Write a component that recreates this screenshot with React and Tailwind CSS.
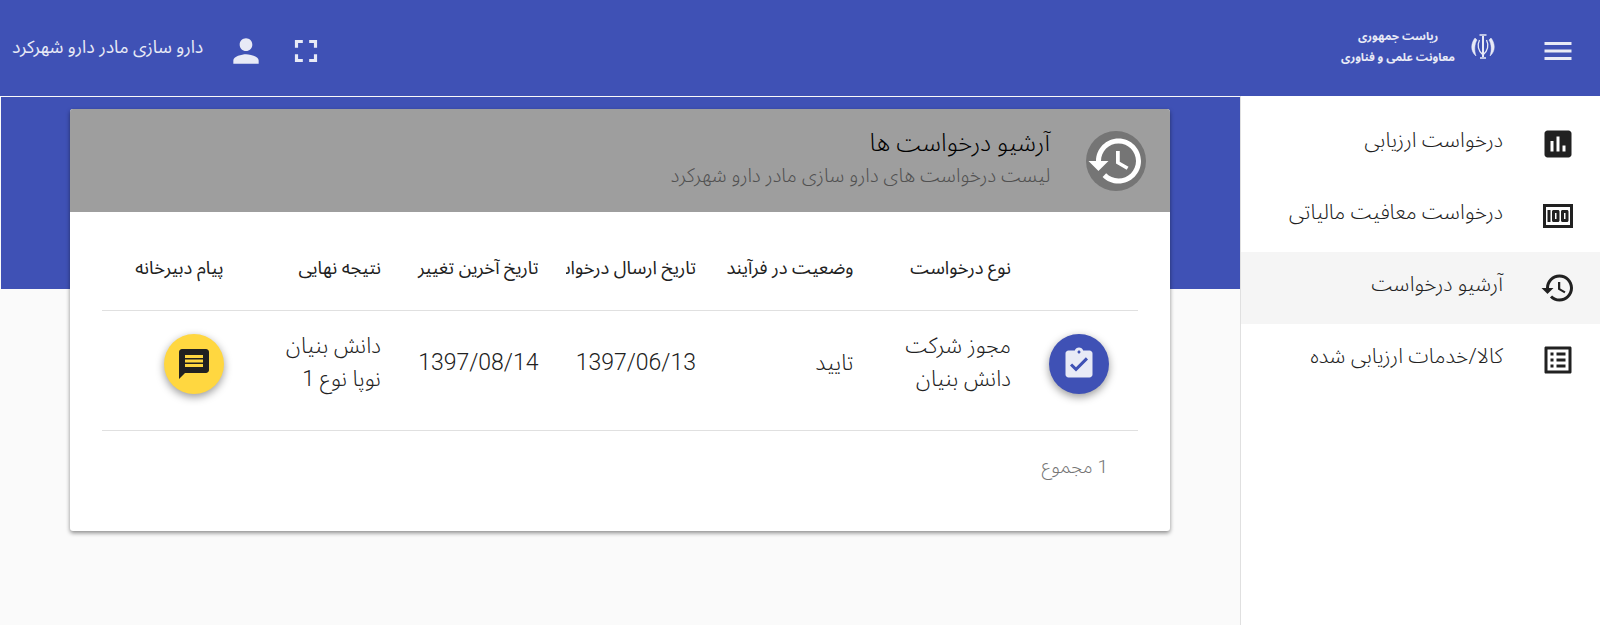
import React from "react";

const font = { fontFamily: "Roboto, 'Noto Sans Arabic', 'DejaVu Sans', sans-serif" };

const paths = {
  menu: "M3 18h18v-2H3v2zm0-5h18v-2H3v2zm0-7v2h18V6H3z",
  fullscreen: "M7 14H5v5h5v-2H7v-3zm-2-4h2V7h3V5H5v5zm12 7h-3v2h5v-5h-2v3zM14 5v2h3v3h2V5h-5z",
  person: "M12 12c2.21 0 4-1.79 4-4s-1.79-4-4-4-4 1.79-4 4 1.79 4 4 4zm0 2c-2.67 0-8 1.34-8 4v2h16v-2c0-2.66-5.33-4-8-4z",
  assessment: "M19 3H5c-1.1 0-2 .9-2 2v14c0 1.1.9 2 2 2h14c1.1 0 2-.9 2-2V5c0-1.1-.9-2-2-2zM9 17H7v-7h2v7zm4 0h-2V7h2v10zm4 0h-2v-4h2v4z",
  money: "M5 8h2v8H5zm7 0H9c-.55 0-1 .45-1 1v6c0 .55.45 1 1 1h3c.55 0 1-.45 1-1V9c0-.55-.45-1-1-1zm-1 6h-1v-4h1v4zm7-6h-3c-.55 0-1 .45-1 1v6c0 .55.45 1 1 1h3c.55 0 1-.45 1-1V9c0-.55-.45-1-1-1zm-1 6h-1v-4h1v4zM2 4v16h20V4H2zm2 14V6h16v12H4z",
  history: "M13 3c-4.97 0-9 4.03-9 9H1l3.89 3.89.07.14L9 12H6c0-3.87 3.13-7 7-7s7 3.13 7 7-3.13 7-7 7c-1.93 0-3.68-.79-4.94-2.06l-1.42 1.42C8.27 19.99 10.51 21 13 21c4.97 0 9-4.03 9-9s-4.03-9-9-9zm-1 5v5l4.28 2.54.72-1.21-3.5-2.08V8H12z",
  listAlt: "M19 5v14H5V5h14m1.1-2H3.9c-.5 0-.9.4-.9.9v16.2c0 .4.4.9.9.9h16.2c.4 0 .9-.5.9-.9V3.9c0-.5-.5-.9-.9-.9zM11 7h6v2h-6V7zm0 4h6v2h-6v-2zm0 4h6v2h-6zM7 7h2v2H7zm0 4h2v2H7zm0 4h2v2H7z",
  assignment: "M19 3h-4.18C14.4 1.84 13.3 1 12 1c-1.3 0-2.4.84-2.82 2H5c-1.1 0-2 .9-2 2v14c0 1.1.9 2 2 2h14c1.1 0 2-.9 2-2V5c0-1.1-.9-2-2-2zm-7 0c.55 0 1 .45 1 1s-.45 1-1 1-1-.45-1-1 .45-1 1-1zm-2 14l-4-4 1.41-1.41L10 14.17l6.59-6.59L18 9l-8 8z",
  message: "M20 2H4c-1.1 0-1.99.9-1.99 2L2 22l4-4h14c1.1 0 2-.9 2-2V4c0-1.1-.9-2-2-2zm-2 12H6v-2h12v2zm0-3H6V9h12v2zm0-3H6V6h12v2z",
};

const Icon = ({ name, className }) => (
  <svg viewBox="0 0 24 24" fill="currentColor" className={className}>
    <path d={paths[name]} />
  </svg>
);

const Emblem = () => (
  <svg viewBox="0 0 26 27" fill="none" stroke="currentColor" className="h-[27px] w-[26px] text-[#e8eaf6]">
    <path d="M13 3v21" strokeWidth="2" />
    <path d="M9.5 2h7M10 25h6" strokeWidth="1.4" />
    <path d="M9.500 7c-2.500 5-1.500 11 3.500 15 5-4 6-10 3.500-15" strokeWidth="1.3" />
    <path d="M5 5C1 10 0 18 6 23c-2-6-1.500-12 1-16z" fill="currentColor" strokeWidth="0.5" />
    <path d="M21 5c4 5 5 13-1 18 2-6 1.500-12-1-16z" fill="currentColor" strokeWidth="0.5" />
  </svg>
);

const menuItems = [
  { label: "درخواست ارزیابی", icon: "assessment" },
  { label: "درخواست معافیت مالیاتی", icon: "money" },
  { label: "آرشیو درخواست", icon: "history", active: true },
  { label: "کالا/خدمات ارزیابی شده", icon: "listAlt" },
];

const columns = [
  "نوع درخواست",
  "وضعیت در فرآیند ارزیابی",
  "تاریخ ارسال درخواست",
  "تاریخ آخرین تغییر",
  "نتیجه نهایی",
  "پیام دبیرخانه",
];

const gridCols = "grid grid-cols-[127px_repeat(5,157.5px)_1fr]";

const Cell = ({ children, className = "text-[22px]" }) => (
  <div className={`mt-[-3px] w-[130px] leading-[33px] font-light text-[#212121] ${className}`}>{children}</div>
);

export default function App() {
  return (
    <div dir="rtl" style={font} className="flex h-[625px] w-[1600px] flex-col overflow-hidden bg-[#fafafa]">
      <header className="flex h-24 shrink-0 items-center bg-[#3f51b5] pt-[5px] pr-6 pl-3 text-[#e8eaf6]">
        <Icon name="menu" className="h-9 w-9" />
        <div className="mt-[-9px] mr-[44px]">
          <Emblem />
        </div>
        <div className="mt-[-7px] mr-[15px] text-center text-[11.5px] leading-[21px] font-bold">
          <div>ریاست جمهوری</div>
          <div>معاونت علمی و فناوری</div>
        </div>
        <div className="mr-auto flex items-center">
          <Icon name="fullscreen" className="h-[38px] w-[38px]" />
          <Icon name="person" className="mr-[22px] h-[38px] w-[38px]" />
          <span className="mt-[-6px] mr-[24px] text-[17.7px]">دارو سازی مادر دارو شهرکرد</span>
        </div>
      </header>

      <div className="flex min-h-0 flex-1">
        <aside className="w-[360px] shrink-0 border-l border-[#e0e0e0] bg-white pt-3">
          {menuItems.map((item) => (
            <div
              key={item.label}
              className={`flex h-[72px] items-center pr-[24px] text-[#212121] ${item.active ? "bg-[#f5f5f5]" : ""}`}
            >
              <Icon name={item.icon} className="h-9 w-9" />
              <span className="mt-[-7px] mr-[37px] text-[21px] font-light">{item.label}</span>
            </div>
          ))}
        </aside>

        <main className="relative flex-1 pt-[13px] pr-[70px] pl-[70px]">
          <div className="absolute top-px right-0 left-px h-[192px] bg-[#3f51b5]" />
          <div className="relative h-[422px] rounded-[3px] bg-white shadow-[0_2px_4px_rgba(0,0,0,0.45)]">
            <div className="flex h-[103px] items-center rounded-t-[3px] bg-[#9e9e9e] pr-6">
              <div className="h-[60px] w-[60px] rounded-full bg-[#757575] text-white">
                <Icon name="history" className="h-[60px] w-[60px]" />
              </div>
              <div className="mt-[-6px] mr-[36px]">
                <div className="text-[24.5px] leading-[36px] font-light text-black">آرشیو درخواست ها</div>
                <div className="text-[19.7px] leading-[30px] font-light text-[#505050]">
                  لیست درخواست های دارو سازی مادر دارو شهرکرد
                </div>
              </div>
            </div>

            <div className="mx-8">
              <div className={`${gridCols} h-[99px] items-center border-b border-[#e0e0e0] pt-[14px]`}>
                <div />
                {columns.map((col, i) => (
                  <div
                    key={col}
                    className={`overflow-hidden text-[18.4px] font-normal whitespace-nowrap text-[#212121] ${i === 5 ? "w-[122px]" : "w-[130px]"}`}
                  >
                    {col}
                  </div>
                ))}
              </div>

              <div className={`${gridCols} h-[120px] items-center border-b border-[#e0e0e0] pb-[14px]`}>
                <div className="pr-[29px]">
                  <button className="flex h-[60px] w-[60px] items-center justify-center rounded-full bg-[#3f51b5] text-[#e8eaf6] shadow-[0_3px_8px_rgba(0,0,0,0.4)]">
                    <Icon name="assignment" className="h-9 w-9" />
                  </button>
                </div>
                <Cell>
                  مجوز شرکت
                  <br />
                  دانش بنیان
                </Cell>
                <Cell>تایید</Cell>
                <Cell className="text-[23px]">1397/06/13</Cell>
                <Cell className="text-[23px]">1397/08/14</Cell>
                <Cell>
                  دانش بنیان
                  <br />
                  نوپا نوع 1
                </Cell>
                <div>
                  <button className="flex h-[60px] w-[60px] items-center justify-center rounded-full bg-[#ffd740] text-[#212121] shadow-[0_3px_8px_rgba(0,0,0,0.4)]">
                    <Icon name="message" className="h-9 w-9" />
                  </button>
                </div>
              </div>

              <div className="pt-[22px] pr-[30px] text-[19px] font-light text-[#757575]">1 مجموع</div>
            </div>
          </div>
        </main>
      </div>
    </div>
  );
}
